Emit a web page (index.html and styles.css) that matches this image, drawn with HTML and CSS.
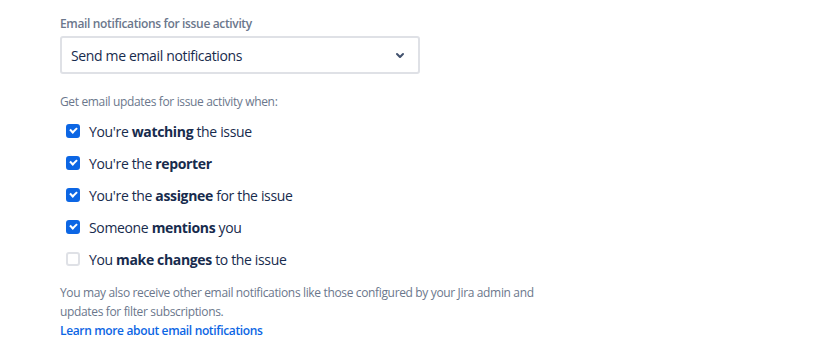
FILE: index.html
```html
<!DOCTYPE html>
<html lang="en">
<head>
    <meta charset="UTF-8">
    <title>Email notifications</title>
    <link rel="stylesheet" href="styles.css">
</head>
<body>
    <div class="settings">
        <label class="field-label">Email notifications for issue activity</label>
        <div class="select">
            <span>Send me email notifications</span>
            <svg class="chevron" width="24" height="24" viewBox="0 0 24 24"><path d="M8.292 10.293a1.009 1.009 0 0 0 0 1.419l2.939 2.965c.218.215.5.322.779.322s.556-.107.769-.322l2.93-2.955a1.01 1.01 0 0 0 0-1.419.987.987 0 0 0-1.406 0l-2.298 2.317-2.307-2.327a.99.99 0 0 0-1.406 0z" fill="#42526E"/></svg>
        </div>

        <p class="hint">Get email updates for issue activity when:</p>
        <ul class="options">
            <li class="option"><span class="box checked"></span><span>You're <b>watching</b> the issue</span></li>
            <li class="option"><span class="box checked"></span><span>You're the <b>reporter</b></span></li>
            <li class="option"><span class="box checked"></span><span>You're the <b>assignee</b> for the issue</span></li>
            <li class="option"><span class="box checked"></span><span>Someone <b>mentions</b> you</span></li>
            <li class="option"><span class="box"></span><span>You <b>make changes</b> to the issue</span></li>
        </ul>

        <p class="note">You may also receive other email notifications like those configured by your Jira admin and updates for filter subscriptions.</p>
        <a class="learn" href="#">Learn more about email notifications</a>
    </div>
</body>
</html>
```

FILE: styles.css
```css
body {
    margin: 0;
    font-family: "Open Sans", "Noto Sans", sans-serif;
    color: #172B4D;
    background: white;
    letter-spacing: -0.35px;
}
.settings {
    width: 500px;
    padding: 16px 0 0 60px;
}
.field-label {
    display: block;
    font-size: 12px;
    font-weight: 600;
    color: #6B778C;
    line-height: 16px;
    margin-bottom: 4px;
}
.select {
    width: 360px;
    height: 38px;
    box-sizing: border-box;
    border: 2px solid #DFE1E6;
    border-radius: 3px;
    display: flex;
    align-items: center;
    justify-content: space-between;
    padding: 0 6px 0 9px;
    font-size: 14px;
}
.chevron {
    display: block;
}
.hint {
    margin: 20px 0 0 0;
    font-size: 12px;
    line-height: 16px;
    color: #6B778C;
}
.options {
    list-style: none;
    margin: 5px 0 0 0;
    padding: 0;
}
.option {
    display: flex;
    align-items: center;
    gap: 9px;
    height: 32px;
    font-size: 14px;
    padding-left: 6px;
}
.option b {
    font-weight: 700;
}
.box {
    width: 10px;
    height: 10px;
    border: 2px solid #DFE1E6;
    border-radius: 3px;
    background: white;
    position: relative;
}
.box.checked {
    background: #0C66E4;
    border-color: #0C66E4;
}
.box.checked::after {
    content: "";
    position: absolute;
    left: 2px;
    top: 1px;
    width: 5px;
    height: 3px;
    border-left: 2px solid white;
    border-bottom: 2px solid white;
    transform: rotate(-45deg);
}
.note {
    margin: 8px 0 0 0;
    font-size: 12px;
    line-height: 19px;
    color: #6B778C;
    width: 500px;
}
.learn {
    display: block;
    font-size: 12px;
    font-weight: 600;
    line-height: 19px;
    color: #0C66E4;
    text-decoration: none;
}
```
